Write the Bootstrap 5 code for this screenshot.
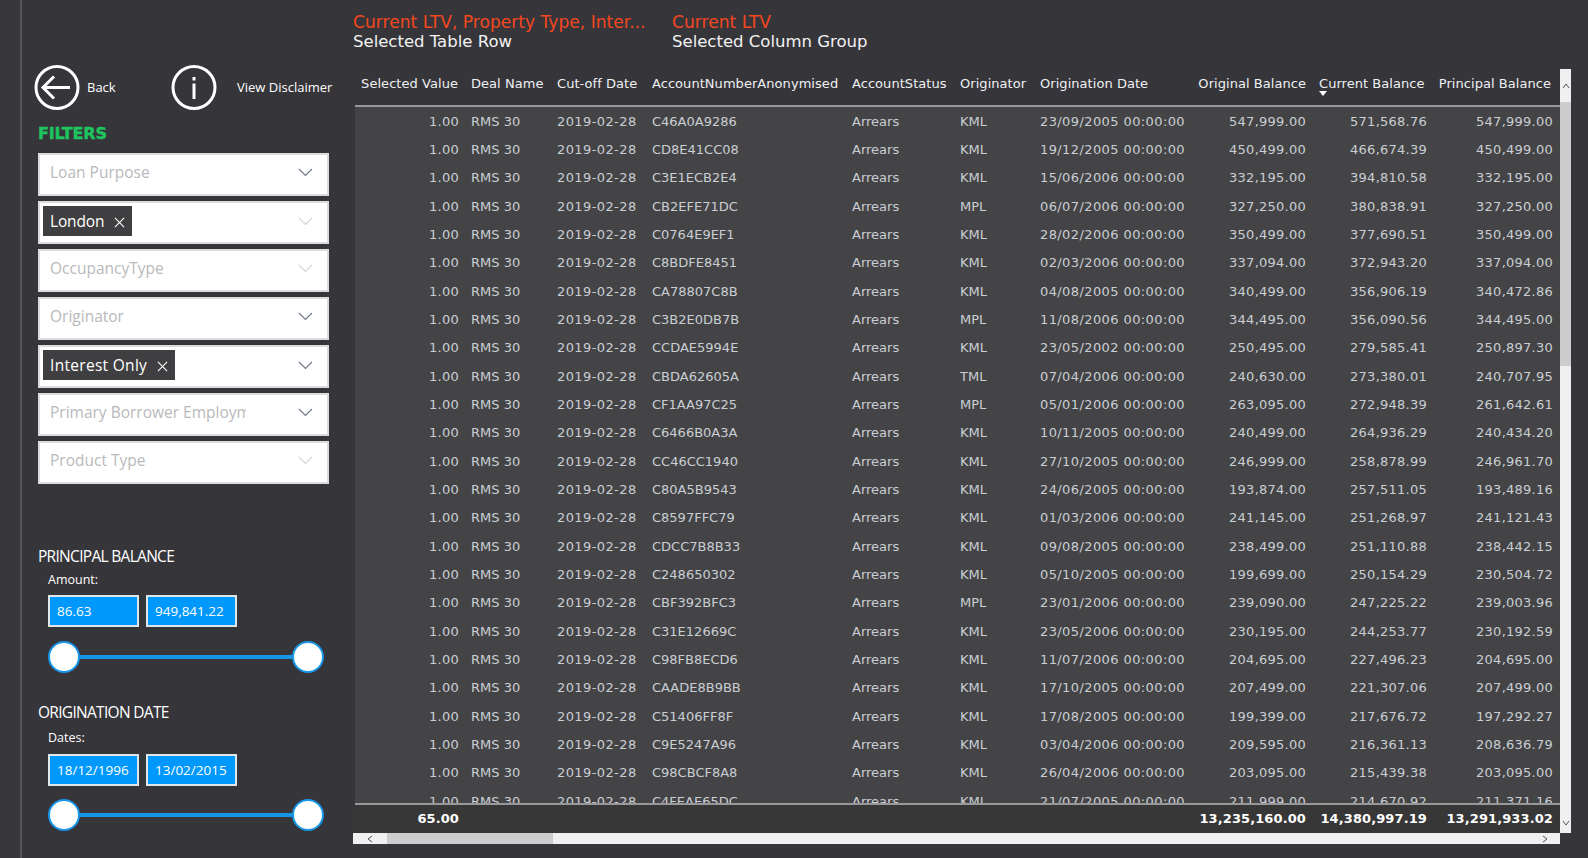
<!DOCTYPE html>
<html lang="en"><head><meta charset="utf-8"><title>Loan tape</title>
<link rel="stylesheet" href="https://cdn.jsdelivr.net/npm/bootstrap@5.3.0/dist/css/bootstrap.min.css">
<style>
html,body{height:858px;overflow:hidden}
body{background:#36353a;font-family:"Open Sans","Noto Sans",sans-serif;color:#fff}
.page{height:858px}
.stripe{width:22px;background:#37363b;border-right:2px solid #55545a;flex:none}
.side{width:331px;flex:none;padding:65px 0 0 12px}
.main{width:1235px;flex:none;font-family:"DejaVu Sans",sans-serif}
.icon-sm{width:46px;height:46px;display:block}
.back-row{height:45px;font-size:13px}
.lbl-back{margin:0 0 0 7px;width:84px}
.lbl-info{margin-left:20px;white-space:nowrap}
.filters-ttl{font:900 16px/1 "DejaVu Sans",sans-serif;color:#1ec45f;margin:16px 0 11px 4px;-webkit-text-stroke:.4px #1ec45f;letter-spacing:-.2px}
.slicer{height:43px;width:291px;margin:0 0 5px 4px;background:#fff;border:2px solid #dcdcdc;color:#b9b9bb;font-size:15.5px;padding:0 14px 4px 10px}
.slicer svg{width:15px;height:9px;flex:none}
.chev{stroke:#6d7480;fill:none;stroke-width:1.1}
.chev-faint{stroke:#d4d4d8;fill:none;stroke-width:1.1}
.chip{background:#3f3f41;color:#fff;height:30px;padding:2px 7px 0 7px;margin-left:3px;font-size:15.5px;gap:10px}
.chip svg{width:11px;height:11px;stroke:#fff;stroke-width:1.2}
.slicer-chip{padding-left:0;padding-bottom:3px}
.sp-tight{letter-spacing:-.15px}
.sp-wide{letter-spacing:.3px}
.trunc{width:196px;overflow:hidden;white-space:nowrap}
.range-a{margin-top:61px}
.range-ttl{font-size:15.5px;letter-spacing:-.7px;margin:0 0 0 4px;line-height:22px;font-weight:400}
.range-sub{font-size:12.5px;margin:4px 0 6px 14px;line-height:18px}
.range-vals{margin-left:14px;gap:7px}
.range-val{width:91px;height:32px;background:#0098fb;border:2px solid #dfe6ec;font-size:13.5px;line-height:28px;padding-left:7px;color:#fff}
.slide{margin:14px 0 0 14px;width:276px;height:32px}
.track{height:4px;flex:1;background:#1796e8}
.thumb{width:32px;height:32px;border-radius:50%;background:#fff;border:2.5px solid #1796e8;flex:none}
.range-b{margin-top:28px}
.range-b .range-sub{margin:6px 0 7px 14px}
.range-b .slide{margin-top:13px}
.titles{height:69px;padding:12px 0 0 0;line-height:20px}
.t-a{width:319px}
.t-red{color:#f4471e;white-space:nowrap;font-size:17.1px}
.t-white{color:#f2f2f2;white-space:nowrap;font-size:16.5px}
.grid-wrap{height:764px}
.tbl-col{width:1207px;padding-left:2px;flex:none}
.ltv{table-layout:fixed;width:1205px;margin:0;font-size:13px;--bs-table-bg:transparent;--bs-table-color:#c9ced4;--bs-table-border-color:transparent;color:#c9ced4}
.ltv td,.ltv th{padding:0 0 0 7px;white-space:nowrap;overflow:hidden;font-weight:400;vertical-align:middle;box-shadow:none;border:0}
.ltv td:nth-child(2),.ltv th:nth-child(2){padding-left:5px}
.ltv td:nth-child(3),.ltv th:nth-child(3){padding-left:6px}
.ltv td:nth-child(3),.ltv td:nth-child(7){letter-spacing:.4px}
.ltv .num{text-align:right;padding:0 6px 0 0;letter-spacing:.25px}
.ltv .num-a{padding-right:7px}
.ltv .num-z{padding-right:7px}
.w1{width:111px}.w2{width:85px}.w3{width:94px}.w4{width:200px}.w5{width:108px}.w6{width:80px}.w7{width:160px}.w8{width:119px}.w9{width:121px}.w10{width:127px}
.head-t{height:38px;border-bottom:2px solid #98989a}
.head-t th{color:#eef0f2;height:36px;padding-bottom:6px;letter-spacing:.05px}
.head-t th.num{padding-bottom:6px;letter-spacing:.05px}
.head-t th.num-a{padding-right:8px}
.head-t th.num-z{padding-right:9px}
.ltv .h-cur{position:relative;padding-left:7px;text-align:left}
.caret-s{position:absolute;left:7px;top:22px;width:0;height:0;border-left:4.5px solid transparent;border-right:4.5px solid transparent;border-top:5px solid #fff}
.body-t{height:696px;overflow:hidden;background:#444446}
.body-t tr{height:28px}
.body-t tr:nth-child(3n+1){height:29px}
.foot-t{height:30px;background:#373737;border-top:2px solid #98989a}
.foot-t td{color:#fff;font-weight:700;height:28px}
.foot-t td.num{padding-bottom:1px;letter-spacing:.1px}
.vbar{width:11px;height:764px;background:#f0f0f0;flex:none}
.vbtn{height:33px;color:#666}
.vthumb{height:264px;background:#cdcdcd}
.vbar svg,.hbar svg{width:8px;height:8px;stroke:#555;fill:none;stroke-width:1}
.vbar .down{margin-top:auto;height:34px;padding-bottom:6px}
.hbar{height:11px;width:1207px;background:#f0f0f0}
.hbtn{width:34px}
.hthumb{width:166px;background:#cdcdcd}
.hend{margin-left:auto;width:30px}
</style></head>
<body>
<div class="page d-flex">
<div class="stripe"></div>
<aside class="side">
  <div class="d-flex align-items-center back-row">
    <svg class="icon-sm" viewBox="0 0 46 46" fill="none" stroke="#fff"><circle cx="23" cy="22.5" r="21" stroke-width="3"/><path d="M36 22.5H10M20 11.5 9 22.5 20 33.5" stroke-width="3"/></svg>
    <p class="lbl-back">Back</p>
    <svg class="icon-sm" viewBox="0 0 46 46" fill="none" stroke="#fff"><circle cx="23" cy="22.5" r="21" stroke-width="3"/><path d="M23 18.5V34" stroke-width="3"/><path d="M23 12v3.5" stroke-width="3"/></svg>
    <span class="lbl-info">View Disclaimer</span>
  </div>
  <div class="filters-ttl">FILTERS</div>
  <div class="slicer d-flex align-items-center justify-content-between"><span>Loan Purpose</span><svg viewBox="0 0 15 9"><path class="chev" d="M1 1l6.5 6.5L14 1"/></svg></div>
  <div class="slicer slicer-chip d-flex align-items-center justify-content-between"><span class="chip d-flex align-items-center"><span class="sp-tight">London</span> <svg viewBox="0 0 12 12"><path d="M1 1l10 10M11 1 1 11"/></svg></span><svg viewBox="0 0 15 9"><path class="chev-faint" d="M1 1l6.5 6.5L14 1"/></svg></div>
  <div class="slicer d-flex align-items-center justify-content-between"><span>OccupancyType</span><svg viewBox="0 0 15 9"><path class="chev-faint" d="M1 1l6.5 6.5L14 1"/></svg></div>
  <div class="slicer d-flex align-items-center justify-content-between"><span>Originator</span><svg viewBox="0 0 15 9"><path class="chev" d="M1 1l6.5 6.5L14 1"/></svg></div>
  <div class="slicer slicer-chip d-flex align-items-center justify-content-between"><span class="chip d-flex align-items-center"><span class="sp-wide">Interest Only</span> <svg viewBox="0 0 12 12"><path d="M1 1l10 10M11 1 1 11"/></svg></span><svg viewBox="0 0 15 9"><path class="chev" d="M1 1l6.5 6.5L14 1"/></svg></div>
  <div class="slicer d-flex align-items-center justify-content-between"><span class="trunc">Primary Borrower Employment</span><svg viewBox="0 0 15 9"><path class="chev" d="M1 1l6.5 6.5L14 1"/></svg></div>
  <div class="slicer d-flex align-items-center justify-content-between"><span>Product Type</span><svg viewBox="0 0 15 9"><path class="chev-faint" d="M1 1l6.5 6.5L14 1"/></svg></div>
  <div class="range-a">
    <h2 class="range-ttl">PRINCIPAL BALANCE</h2>
    <div class="range-sub">Amount:</div>
    <div class="d-flex range-vals"><div class="range-val">86.63</div><div class="range-val">949,841.22</div></div>
    <div class="slide d-flex align-items-center"><div class="thumb"></div><div class="track"></div><div class="thumb"></div></div>
  </div>
  <div class="range-b">
    <h2 class="range-ttl">ORIGINATION DATE</h2>
    <div class="range-sub">Dates:</div>
    <div class="d-flex range-vals"><div class="range-val">18/12/1996</div><div class="range-val">13/02/2015</div></div>
    <div class="slide d-flex align-items-center"><div class="thumb"></div><div class="track"></div><div class="thumb"></div></div>
  </div>
</aside>
<main class="main">
  <div class="titles d-flex">
    <div class="t-a"><div class="t-red">Current LTV, Property Type, Inter...</div><div class="t-white">Selected Table Row</div></div>
    <div><div class="t-red">Current LTV</div><div class="t-white">Selected Column Group</div></div>
  </div>
  <div class="grid-wrap d-flex">
    <div class="tbl-col">
      <div class="head-t">
        <table class="table ltv"><colgroup><col class="w1"><col class="w2"><col class="w3"><col class="w4"><col class="w5"><col class="w6"><col class="w7"><col class="w8"><col class="w9"><col class="w10"></colgroup>
        <thead><tr><th class="num num-a">Selected Value</th><th>Deal Name</th><th>Cut-off Date</th><th>AccountNumberAnonymised</th><th>AccountStatus</th><th>Originator</th><th>Origination Date</th><th class="num">Original Balance</th><th class="h-cur">Current Balance<span class="caret-s"></span></th><th class="num num-z">Principal Balance</th></tr></thead></table>
      </div>
      <div class="body-t">
        <table class="table ltv"><colgroup><col class="w1"><col class="w2"><col class="w3"><col class="w4"><col class="w5"><col class="w6"><col class="w7"><col class="w8"><col class="w9"><col class="w10"></colgroup>
        <tbody>
<tr><td class="num num-a">1.00</td><td>RMS 30</td><td>2019-02-28</td><td>C46A0A9286</td><td>Arrears</td><td>KML</td><td>23/09/2005 00:00:00</td><td class="num">547,999.00</td><td class="num">571,568.76</td><td class="num num-z">547,999.00</td></tr>
<tr><td class="num num-a">1.00</td><td>RMS 30</td><td>2019-02-28</td><td>CD8E41CC08</td><td>Arrears</td><td>KML</td><td>19/12/2005 00:00:00</td><td class="num">450,499.00</td><td class="num">466,674.39</td><td class="num num-z">450,499.00</td></tr>
<tr><td class="num num-a">1.00</td><td>RMS 30</td><td>2019-02-28</td><td>C3E1ECB2E4</td><td>Arrears</td><td>KML</td><td>15/06/2006 00:00:00</td><td class="num">332,195.00</td><td class="num">394,810.58</td><td class="num num-z">332,195.00</td></tr>
<tr><td class="num num-a">1.00</td><td>RMS 30</td><td>2019-02-28</td><td>CB2EFE71DC</td><td>Arrears</td><td>MPL</td><td>06/07/2006 00:00:00</td><td class="num">327,250.00</td><td class="num">380,838.91</td><td class="num num-z">327,250.00</td></tr>
<tr><td class="num num-a">1.00</td><td>RMS 30</td><td>2019-02-28</td><td>C0764E9EF1</td><td>Arrears</td><td>KML</td><td>28/02/2006 00:00:00</td><td class="num">350,499.00</td><td class="num">377,690.51</td><td class="num num-z">350,499.00</td></tr>
<tr><td class="num num-a">1.00</td><td>RMS 30</td><td>2019-02-28</td><td>C8BDFE8451</td><td>Arrears</td><td>KML</td><td>02/03/2006 00:00:00</td><td class="num">337,094.00</td><td class="num">372,943.20</td><td class="num num-z">337,094.00</td></tr>
<tr><td class="num num-a">1.00</td><td>RMS 30</td><td>2019-02-28</td><td>CA78807C8B</td><td>Arrears</td><td>KML</td><td>04/08/2005 00:00:00</td><td class="num">340,499.00</td><td class="num">356,906.19</td><td class="num num-z">340,472.86</td></tr>
<tr><td class="num num-a">1.00</td><td>RMS 30</td><td>2019-02-28</td><td>C3B2E0DB7B</td><td>Arrears</td><td>MPL</td><td>11/08/2006 00:00:00</td><td class="num">344,495.00</td><td class="num">356,090.56</td><td class="num num-z">344,495.00</td></tr>
<tr><td class="num num-a">1.00</td><td>RMS 30</td><td>2019-02-28</td><td>CCDAE5994E</td><td>Arrears</td><td>KML</td><td>23/05/2002 00:00:00</td><td class="num">250,495.00</td><td class="num">279,585.41</td><td class="num num-z">250,897.30</td></tr>
<tr><td class="num num-a">1.00</td><td>RMS 30</td><td>2019-02-28</td><td>CBDA62605A</td><td>Arrears</td><td>TML</td><td>07/04/2006 00:00:00</td><td class="num">240,630.00</td><td class="num">273,380.01</td><td class="num num-z">240,707.95</td></tr>
<tr><td class="num num-a">1.00</td><td>RMS 30</td><td>2019-02-28</td><td>CF1AA97C25</td><td>Arrears</td><td>MPL</td><td>05/01/2006 00:00:00</td><td class="num">263,095.00</td><td class="num">272,948.39</td><td class="num num-z">261,642.61</td></tr>
<tr><td class="num num-a">1.00</td><td>RMS 30</td><td>2019-02-28</td><td>C6466B0A3A</td><td>Arrears</td><td>KML</td><td>10/11/2005 00:00:00</td><td class="num">240,499.00</td><td class="num">264,936.29</td><td class="num num-z">240,434.20</td></tr>
<tr><td class="num num-a">1.00</td><td>RMS 30</td><td>2019-02-28</td><td>CC46CC1940</td><td>Arrears</td><td>KML</td><td>27/10/2005 00:00:00</td><td class="num">246,999.00</td><td class="num">258,878.99</td><td class="num num-z">246,961.70</td></tr>
<tr><td class="num num-a">1.00</td><td>RMS 30</td><td>2019-02-28</td><td>C80A5B9543</td><td>Arrears</td><td>KML</td><td>24/06/2005 00:00:00</td><td class="num">193,874.00</td><td class="num">257,511.05</td><td class="num num-z">193,489.16</td></tr>
<tr><td class="num num-a">1.00</td><td>RMS 30</td><td>2019-02-28</td><td>C8597FFC79</td><td>Arrears</td><td>KML</td><td>01/03/2006 00:00:00</td><td class="num">241,145.00</td><td class="num">251,268.97</td><td class="num num-z">241,121.43</td></tr>
<tr><td class="num num-a">1.00</td><td>RMS 30</td><td>2019-02-28</td><td>CDCC7B8B33</td><td>Arrears</td><td>KML</td><td>09/08/2005 00:00:00</td><td class="num">238,499.00</td><td class="num">251,110.88</td><td class="num num-z">238,442.15</td></tr>
<tr><td class="num num-a">1.00</td><td>RMS 30</td><td>2019-02-28</td><td>C248650302</td><td>Arrears</td><td>KML</td><td>05/10/2005 00:00:00</td><td class="num">199,699.00</td><td class="num">250,154.29</td><td class="num num-z">230,504.72</td></tr>
<tr><td class="num num-a">1.00</td><td>RMS 30</td><td>2019-02-28</td><td>CBF392BFC3</td><td>Arrears</td><td>MPL</td><td>23/01/2006 00:00:00</td><td class="num">239,090.00</td><td class="num">247,225.22</td><td class="num num-z">239,003.96</td></tr>
<tr><td class="num num-a">1.00</td><td>RMS 30</td><td>2019-02-28</td><td>C31E12669C</td><td>Arrears</td><td>KML</td><td>23/05/2006 00:00:00</td><td class="num">230,195.00</td><td class="num">244,253.77</td><td class="num num-z">230,192.59</td></tr>
<tr><td class="num num-a">1.00</td><td>RMS 30</td><td>2019-02-28</td><td>C98FB8ECD6</td><td>Arrears</td><td>KML</td><td>11/07/2006 00:00:00</td><td class="num">204,695.00</td><td class="num">227,496.23</td><td class="num num-z">204,695.00</td></tr>
<tr><td class="num num-a">1.00</td><td>RMS 30</td><td>2019-02-28</td><td>CAADE8B9BB</td><td>Arrears</td><td>KML</td><td>17/10/2005 00:00:00</td><td class="num">207,499.00</td><td class="num">221,307.06</td><td class="num num-z">207,499.00</td></tr>
<tr><td class="num num-a">1.00</td><td>RMS 30</td><td>2019-02-28</td><td>C51406FF8F</td><td>Arrears</td><td>KML</td><td>17/08/2005 00:00:00</td><td class="num">199,399.00</td><td class="num">217,676.72</td><td class="num num-z">197,292.27</td></tr>
<tr><td class="num num-a">1.00</td><td>RMS 30</td><td>2019-02-28</td><td>C9E5247A96</td><td>Arrears</td><td>KML</td><td>03/04/2006 00:00:00</td><td class="num">209,595.00</td><td class="num">216,361.13</td><td class="num num-z">208,636.79</td></tr>
<tr><td class="num num-a">1.00</td><td>RMS 30</td><td>2019-02-28</td><td>C98CBCF8A8</td><td>Arrears</td><td>KML</td><td>26/04/2006 00:00:00</td><td class="num">203,095.00</td><td class="num">215,439.38</td><td class="num num-z">203,095.00</td></tr>
<tr><td class="num num-a">1.00</td><td>RMS 30</td><td>2019-02-28</td><td>C4FEAE65DC</td><td>Arrears</td><td>KML</td><td>21/07/2005 00:00:00</td><td class="num">211,999.00</td><td class="num">214,670.92</td><td class="num num-z">211,371.16</td></tr>
        </tbody></table>
      </div>
      <div class="foot-t">
        <table class="table ltv"><colgroup><col class="w1"><col class="w2"><col class="w3"><col class="w4"><col class="w5"><col class="w6"><col class="w7"><col class="w8"><col class="w9"><col class="w10"></colgroup>
        <tfoot><tr><td class="num num-a">65.00</td><td></td><td></td><td></td><td></td><td></td><td></td><td class="num">13,235,160.00</td><td class="num">14,380,997.19</td><td class="num num-z">13,291,933.02</td></tr></tfoot></table>
      </div>
    </div>
    <div class="vbar d-flex flex-column">
      <div class="vbtn d-flex align-items-center justify-content-center"><svg viewBox="0 0 8 8"><path d="M1 6l3-4 3 4"/></svg></div>
      <div class="vthumb"></div>
      <div class="down d-flex align-items-end justify-content-center"><svg viewBox="0 0 8 8"><path d="M1 2l3 4 3-4"/></svg></div>
    </div>
  </div>
  <div class="hbar d-flex">
    <div class="hbtn d-flex align-items-center justify-content-center"><svg viewBox="0 0 8 8"><path d="M6 1 2 4l4 3"/></svg></div>
    <div class="hthumb"></div>
    <div class="hend d-flex align-items-center justify-content-center"><svg viewBox="0 0 8 8"><path d="M2 1l4 3-4 3"/></svg></div>
  </div>
</main>
</div>
<script src="https://cdn.jsdelivr.net/npm/bootstrap@5.3.0/dist/js/bootstrap.bundle.min.js"></script>
</body></html>
